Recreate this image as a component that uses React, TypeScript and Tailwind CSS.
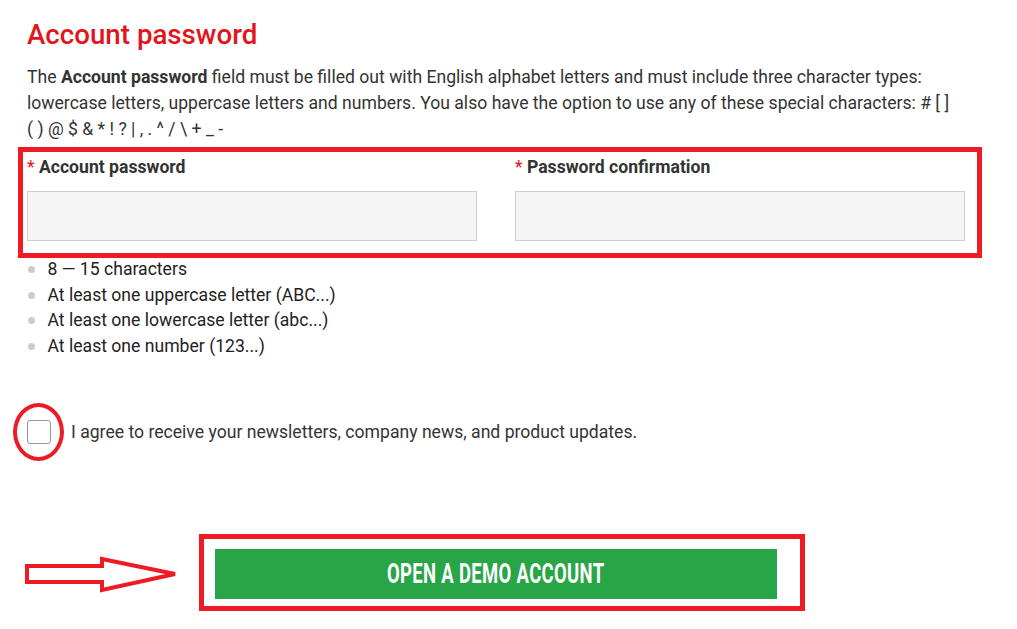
import React from "react";

const requirements = [
  "8 — 15 characters",
  "At least one uppercase letter (ABC...)",
  "At least one lowercase letter (abc...)",
  "At least one number (123...)",
];

const Field = ({ label }: { label: string }) => (
  <div className="flex flex-col">
    <label className="text-[17.6px] leading-6 font-bold text-[#333]">
      <span className="text-[#e3151c] font-normal">*</span> {label}
    </label>
    <input
      type="password"
      className="mt-3 h-[50px] w-full border border-[#cccccc] bg-[#f5f5f5] outline-none"
    />
  </div>
);

export default function App() {
  return (
    <div
      className="min-h-screen bg-white pl-[27px] pt-[18px]"
      style={{ fontFamily: "Roboto, 'Noto Sans', sans-serif" }}
    >
      <div className="w-[938px]">
        {/* Heading */}
        <h1 className="text-[27.7px] leading-[34px] font-medium text-[#e3151c]">Account password</h1>

        {/* Description */}
        <p className="mt-3 text-[17.6px] leading-[26px] text-[#333]">
          The <b className="font-bold">Account password</b> field must be filled out with English alphabet letters and
          must include three character types: lowercase letters, uppercase letters and numbers. You also have the
          option to use any of these special characters: # [ ] {"(\u00a0)"} @ $ &amp; * ! ? | , . ^ / \ + _ -
        </p>

        {/* Password fields + annotation box */}
        <div className="relative mt-[13px]">
          <div className="grid grid-cols-2 gap-[38px]">
            <Field label="Account password" />
            <Field label="Password confirmation" />
          </div>
          <div className="pointer-events-none absolute -top-[8px] -left-[9px] -right-[17px] -bottom-[17px] border-[5px] border-[#ed1c24]" />
        </div>

        {/* Requirements */}
        <ul className="mt-[16px] text-[17.6px] leading-[25.6px] text-[#222]">
          {requirements.map((r) => (
            <li key={r} className="flex items-center">
              <span className="ml-[0.5px] mr-[13px] h-[7px] w-[7px] rounded-full bg-[#cccccc]" />
              {r}
            </li>
          ))}
        </ul>

        {/* Newsletter checkbox */}
        <div className="mt-[61px] flex items-center gap-5">
          <div className="relative h-6 w-6 shrink-0">
            <input
              type="checkbox"
              className="h-6 w-6 appearance-none rounded-[3px] border border-[#999] bg-white"
            />
            <div className="pointer-events-none absolute -top-[17px] -bottom-[17px] -left-[14px] -right-[13px] rounded-[50%] border-4 border-[#ed1c24]" />
          </div>
          <span className="text-[17.6px] leading-6 text-[#333]">
            I agree to receive your newsletters, company news, and product updates.
          </span>
        </div>

        {/* Submit */}
        <div className="mt-[105px] flex items-center">
          <svg width="160" height="50" viewBox="0 0 160 50" className="-ml-[7px] shrink-0">
            <polygon
              points="7,17 82,17 82,10 155,25 82,41 82,33 7,33"
              fill="none"
              stroke="#ed1c24"
              strokeWidth="4"
              strokeLinejoin="miter"
            />
          </svg>
          <div className="relative ml-[35px]">
            <button className="flex h-[50px] w-[562px] items-center justify-center bg-[#28a547] text-white">
              <span className="inline-block scale-x-[0.66] text-[28px] font-bold uppercase leading-none tracking-[0.5px]">
                Open a demo account
              </span>
            </button>
            <div className="pointer-events-none absolute -top-[15px] -left-[16px] -right-[28px] -bottom-[12px] border-[5px] border-[#ed1c24]" />
          </div>
        </div>
      </div>
    </div>
  );
}
